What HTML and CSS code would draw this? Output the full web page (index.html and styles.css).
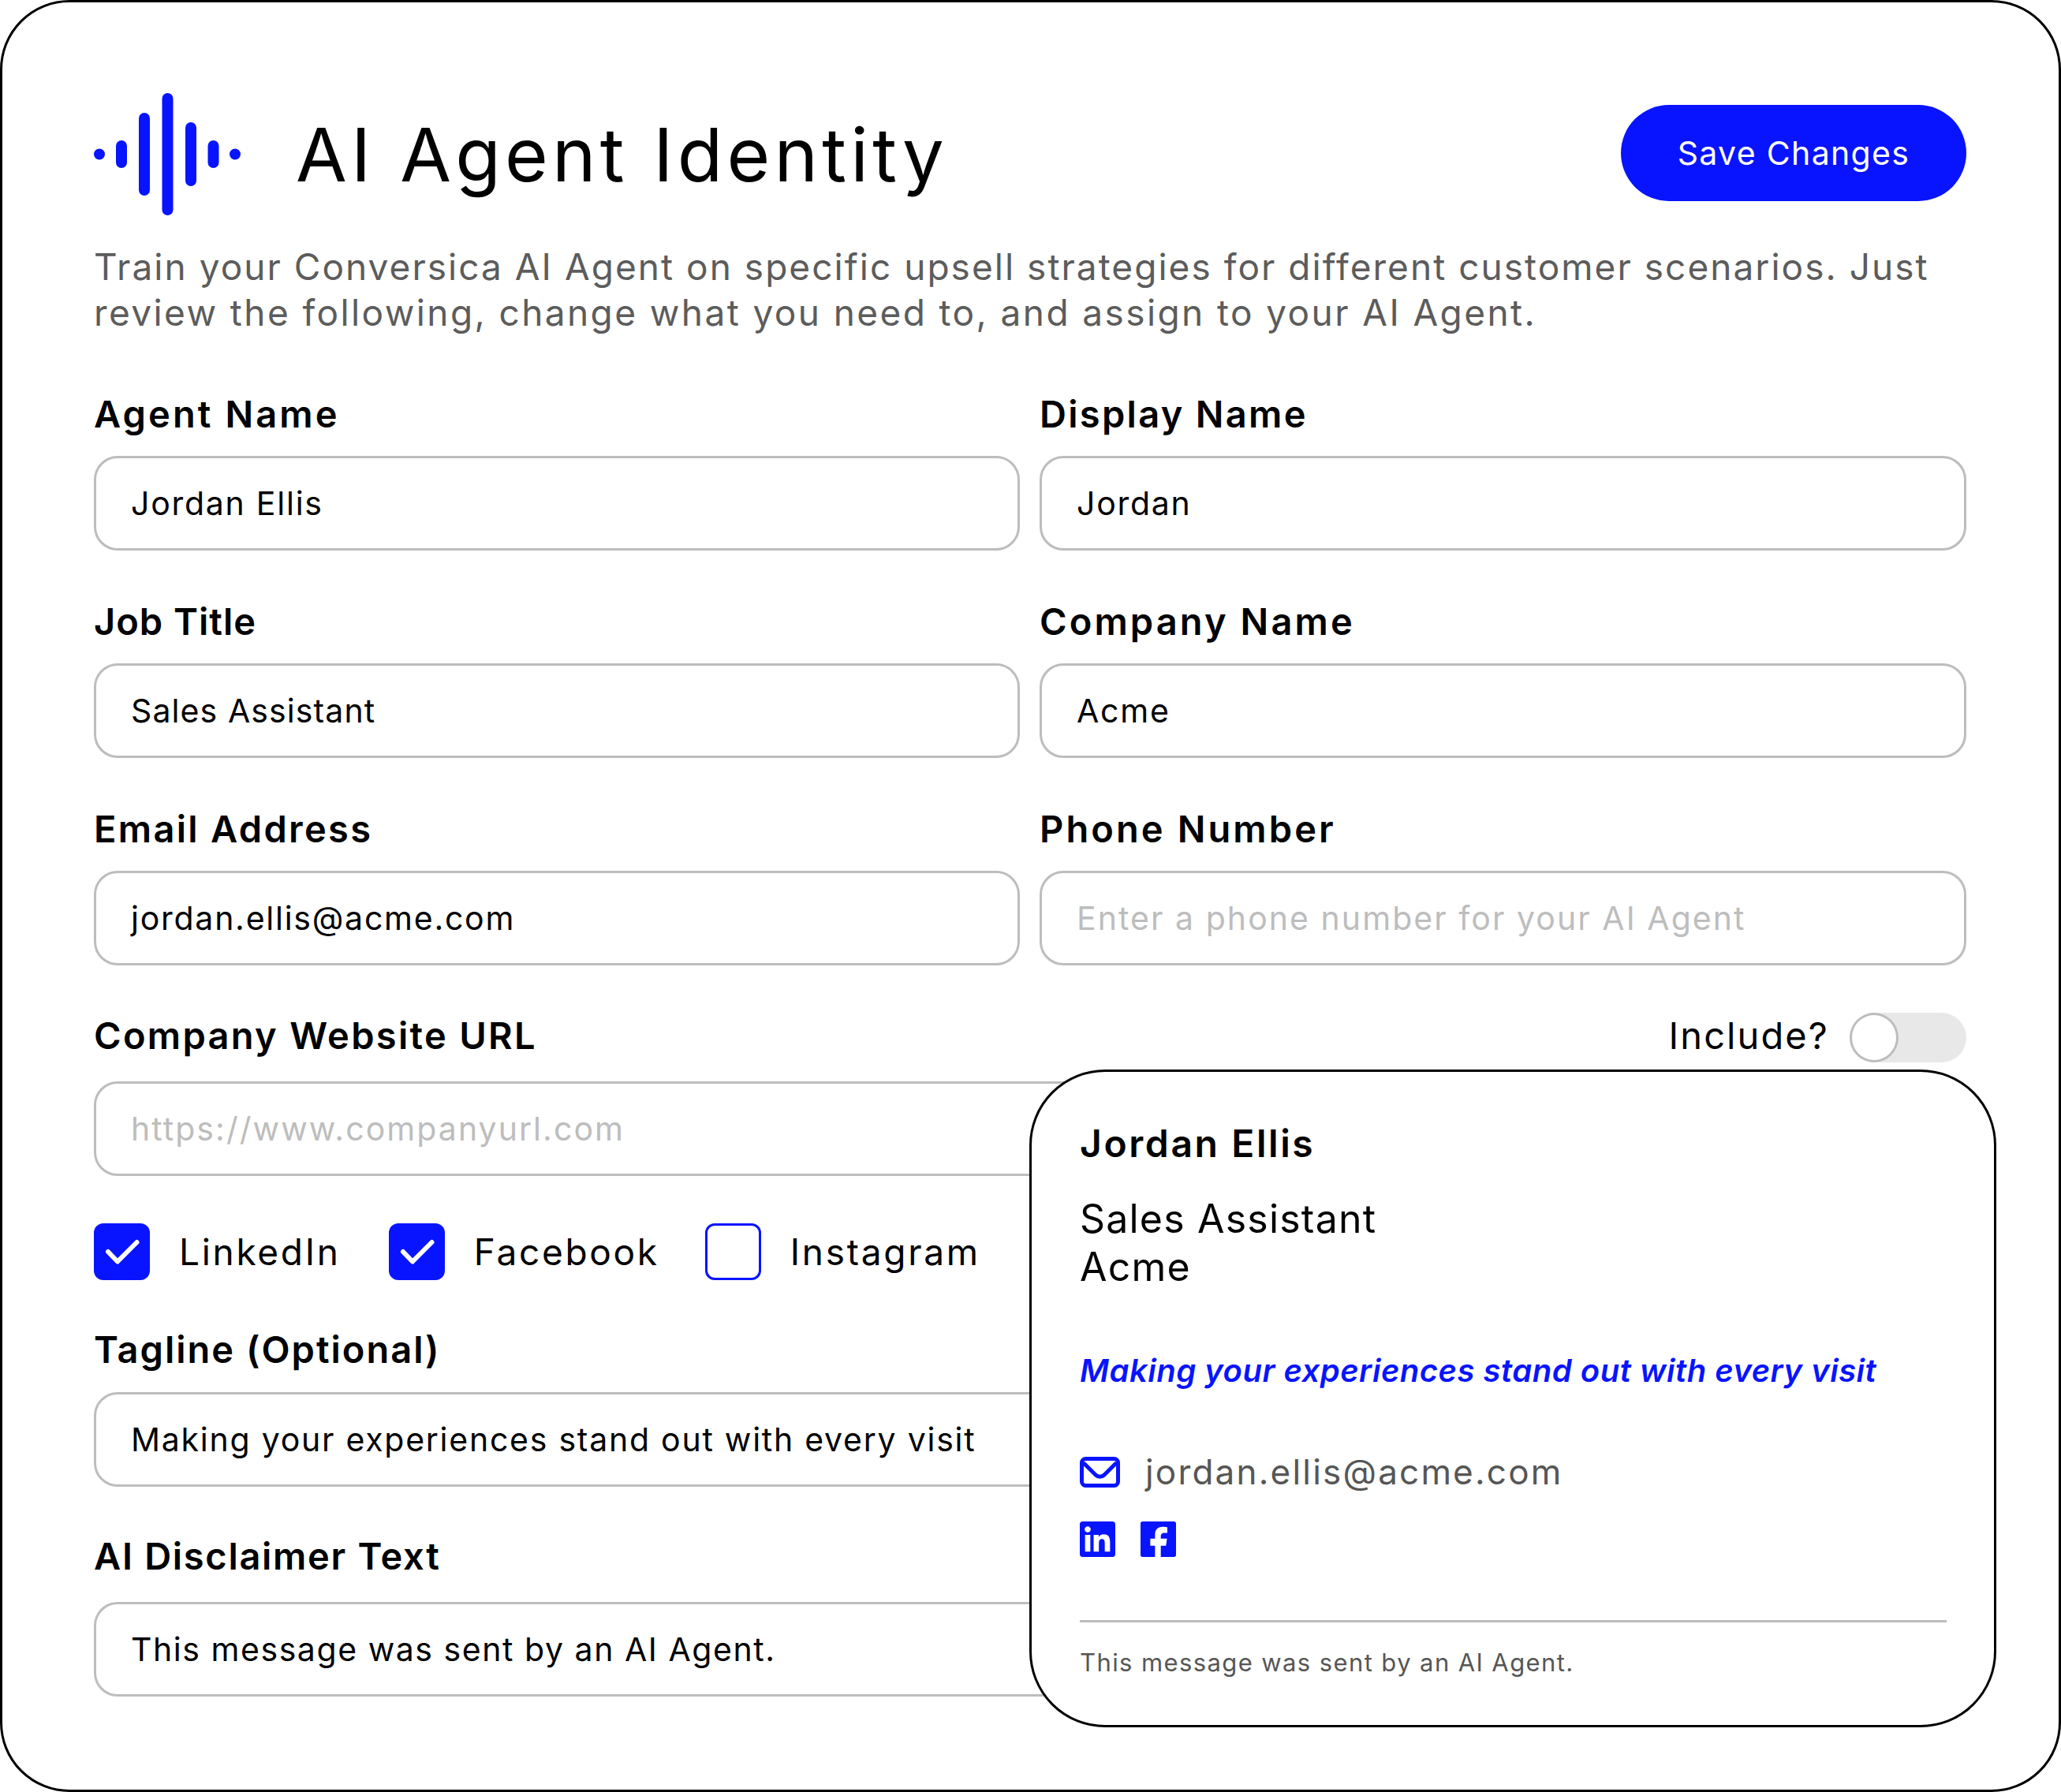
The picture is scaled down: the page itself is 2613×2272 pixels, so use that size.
FILE: index.html
```html
<!DOCTYPE html>
<html lang="en">
<head>
<meta charset="utf-8">
<title>AI Agent Identity</title>
<link rel="stylesheet" href="styles.css">
</head>
<body>
<main class="frame">
  <header class="header">
    <svg class="logo" viewBox="0 0 190 155" aria-hidden="true">
      <path d="M7 77.500v0M35 67v21M64 32v91M93.500 7v141M123 44v67M151.500 67v21M179 77.500v0"/>
    </svg>
    <h1 class="title">AI Agent Identity</h1>
    <button class="save" type="button">Save Changes</button>
  </header>
  <p class="desc">Train your Conversica AI Agent on specific upsell strategies for different customer scenarios. Just<br><span class="desc-second">review the following, change what you need to, and assign to your AI Agent.</span></p>

  <section class="grid">
    <div class="field"><label class="label label-wide">Agent Name</label><div class="input">Jordan Ellis</div></div>
    <div class="field"><label class="label">Display Name</label><div class="input">Jordan</div></div>
    <div class="field"><label class="label label-tight">Job Title</label><div class="input input-tight">Sales Assistant</div></div>
    <div class="field"><label class="label label-wide">Company Name</label><div class="input">Acme</div></div>
    <div class="field"><label class="label">Email Address</label><div class="input">jordan.ellis@acme.com</div></div>
    <div class="field"><label class="label label-wide">Phone Number</label><div class="input placeholder">Enter a phone number for your AI Agent</div></div>
  </section>

  <div class="url-head">
    <label class="label">Company Website URL</label>
    <div class="include">Include?<span class="toggle"><span class="knob"></span></span></div>
  </div>
  <div class="input placeholder">https://www.companyurl.com</div>

  <div class="checks">
    <div class="check"><span class="box on"><svg viewBox="0 0 71 72"><path d="M18 36l12 12.500L54.500 24"/></svg></span>LinkedIn</div>
    <div class="check"><span class="box on"><svg viewBox="0 0 71 72"><path d="M18 36l12 12.500L54.500 24"/></svg></span>Facebook</div>
    <div class="check"><span class="box"></span>Instagram</div>
  </div>

  <div class="field tagline"><label class="label label-mid">Tagline (Optional)</label><div class="input">Making your experiences stand out with every visit</div></div>
  <div class="field disclaimer"><label class="label label-snug">AI Disclaimer Text</label><div class="input input-mid">This message was sent by an AI Agent.</div></div>

  <aside class="card">
    <div class="card-name">Jordan Ellis</div>
    <div class="card-role">Sales Assistant<br>Acme</div>
    <div class="card-tag">Making your experiences stand out with every visit</div>
    <div class="card-email">
      <svg class="mail" viewBox="0 0 51 39" aria-hidden="true"><rect x="2.500" y="2.500" width="46" height="34" rx="5"/><path d="M6 9l14 14q5.500 4.500 11 0L45 9"/></svg>
      jordan.ellis@acme.com
    </div>
    <div class="card-social">
      <svg viewBox="0 0 24 24" aria-hidden="true"><path d="M20.447 20.452h-3.554v-5.569c0-1.328-.027-3.037-1.852-3.037-1.853 0-2.136 1.445-2.136 2.939v5.667H9.351V9h3.414v1.561h.046c.477-.9 1.637-1.85 3.37-1.85 3.601 0 4.267 2.37 4.267 5.455v6.286zM5.337 7.433c-1.144 0-2.063-.926-2.063-2.065 0-1.138.92-2.063 2.063-2.063 1.14 0 2.064.925 2.064 2.063 0 1.139-.925 2.065-2.064 2.065zm1.782 13.019H3.555V9h3.564v11.452zM22.225 0H1.771C.792 0 0 .774 0 1.729v20.542C0 23.227.792 24 1.771 24h20.451C23.2 24 24 23.227 24 22.271V1.729C24 .774 23.2 0 22.222 0h.003z"/></svg>
      <svg viewBox="0 0 24 24" aria-hidden="true"><path d="M22.700 0H1.300C.600 0 0 .600 0 1.300v21.400C0 23.400.600 24 1.300 24H9.800v-7.600H6.600v-4.800h3.200V8.800C9.800 5.500 11.800 3.600 14.800 3.600c1.400 0 2.800.200 3.300.300v3.800h-2c-1.700 0-2.400 1-2.400 2.200v1.700h4.200l-.7 4.800h-3.500V24h9c.7 0 1.300-.6 1.300-1.300V1.300C24 .600 23.400 0 22.700 0z"/></svg>
    </div>
    <div class="card-foot">This message was sent by an AI Agent.</div>
  </aside>
</main>
</body>
</html>
```
FILE: styles.css
```css
* { box-sizing: border-box; }
html, body { margin: 0; padding: 0; background: #fff; }
body { font-family: Inter, "Liberation Sans", sans-serif; color: #000; }
.frame {
  position: relative;
  width: 2613px;
  height: 2272px;
  border: 3px solid #000;
  border-radius: 88px;
  padding: 115px 117px 0 116px;
  overflow: hidden;
}
.header { display: flex; align-items: center; height: 155px; }
.logo { width: 190px; height: 155px; flex: none; }
.logo path { fill: none; stroke: #0814ff; stroke-width: 14; stroke-linecap: round; }
.title { margin: 0 0 0 66px; font-size: 94px; font-weight: 400; letter-spacing: 5.2px; line-height: 110px; flex: 1; }
.save {
  width: 438px; height: 122px; border: 0; border-radius: 61px; padding: 0; margin-bottom: 3px;
  background: #0814ff; color: #fff; font: 400 41px Inter, sans-serif; letter-spacing: 1.35px;
}
.desc { margin: 36px 0 0; font-size: 46px; letter-spacing: 2.03px; line-height: 58px; color: #5c5c5c; white-space: nowrap; }
.desc-second { letter-spacing: 2.4px; }
.grid { display: grid; grid-template-columns: 1174px 1175px; column-gap: 25px; row-gap: 62px; margin-top: 72px; }
.field { display: flex; flex-direction: column; }
.label { display: block; font-size: 47px; font-weight: 600; letter-spacing: 2.3px; line-height: 56px; }
.label-wide { letter-spacing: 3.1px; }
.label-tight { letter-spacing: 1px; }
.label-snug { letter-spacing: 1.7px; }
.label-mid { letter-spacing: 2px; }
.field .label { margin-bottom: 25px; }
.input {
  height: 120px; border: 3px solid #bdbdbd; border-radius: 30px; padding: 0 0 0 44px;
  display: flex; align-items: center; font-size: 41px; letter-spacing: 1.75px; background: #fff;
}
.input-tight { letter-spacing: 1.1px; }
.input-mid { letter-spacing: 1.55px; }
.placeholder { color: #bdbdbd; letter-spacing: 2.05px; }
.url-head { display: flex; justify-content: space-between; align-items: flex-start; height: 63px; margin: 60px 0 24px; }
.url-head .label { padding-top: 1px; }
.include { display: flex; align-items: flex-start; gap: 26px; font-size: 47px; letter-spacing: 2.1px; line-height: 58px; }
.toggle { display: block; width: 148px; height: 63px; background: #e8e8e8; border-radius: 32px; }
.knob { display: block; width: 62px; height: 63px; border-radius: 50%; background: #fff; border: 3px solid #bdbdbd; }
.checks { display: flex; margin-top: 60px; height: 72px; }
.check { display: flex; align-items: center; gap: 37px; font-size: 46px; letter-spacing: 2.7px; margin-right: 58px; }
.check:first-child { margin-right: 61px; }
.box { display: block; width: 71px; height: 72px; border: 3px solid #0814ff; border-radius: 12px; }
.box.on { background: #0814ff; border: 0; }
.box svg { display: block; width: 71px; height: 72px; }
.box path { fill: none; stroke: #fff; stroke-width: 6; stroke-linecap: round; stroke-linejoin: round; }
.tagline { margin-top: 60px; }
.tagline .label { margin-bottom: 26px; }
.disclaimer { margin-top: 60px; }
.disclaimer .label { margin-bottom: 30px; }
.card {
  position: absolute; left: 1302px; top: 1353px; width: 1226px; height: 834px;
  background: #fff; border: 3px solid #000; border-radius: 96px; padding: 61px 0 0 61px;
}
.card-name { font-size: 48px; font-weight: 600; letter-spacing: 2.6px; line-height: 60px; }
.card-role { margin-top: 35px; font-size: 50px; letter-spacing: 1.2px; line-height: 61px; }
.card-tag { margin-top: 76px; font-size: 40px; font-weight: 600; font-style: italic; letter-spacing: .5px; line-height: 50px; color: #0814ff; }
.card-email { display: flex; align-items: center; gap: 32px; height: 60px; margin-top: 73px; font-size: 44px; letter-spacing: 2.2px; color: #565656; }
.mail { width: 51px; height: 39px; flex: none; }
.mail rect, .mail path { fill: none; stroke: #0814ff; stroke-width: 5; stroke-linecap: round; }
.card-social { display: flex; gap: 32px; margin-top: 33px; height: 45px; }
.card-social svg { width: 45px; height: 45px; fill: #0814ff; }
.card-foot { margin: 80px 0 0; width: 1099px; border-top: 3px solid #bdbdbd; padding-top: 31px; font-size: 31px; letter-spacing: 1.4px; line-height: 40px; color: #565656; }
```
